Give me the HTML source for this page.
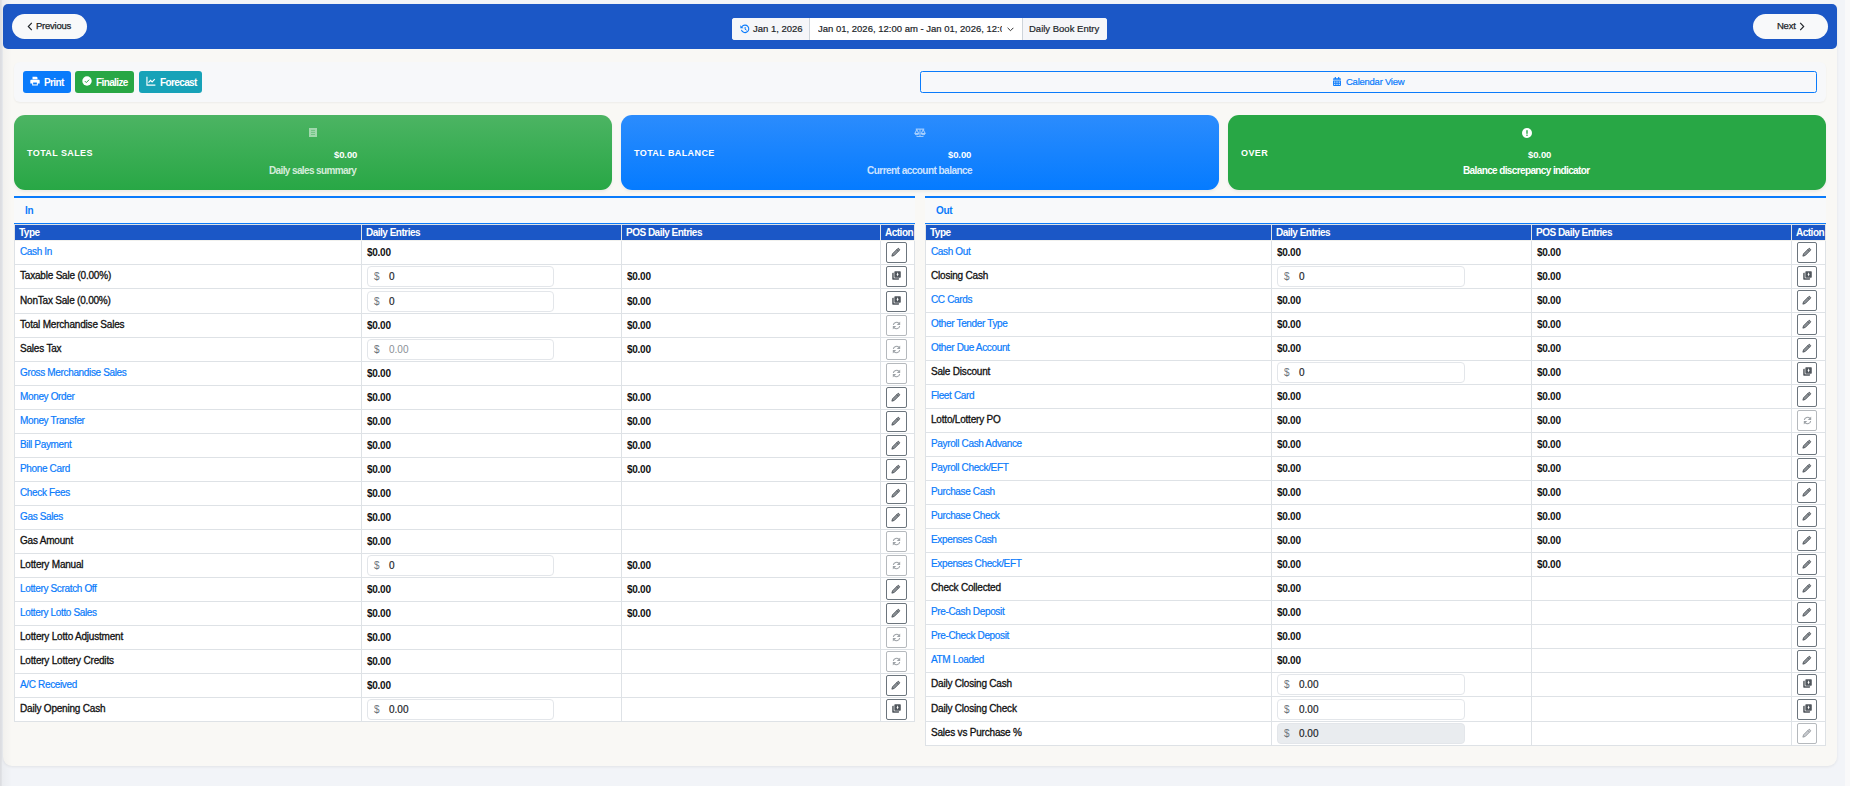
<!DOCTYPE html>
<html><head><meta charset="utf-8"><title>Daily Book Entry</title>
<style>
*{box-sizing:border-box;margin:0;padding:0}
html,body{width:1850px;height:786px;overflow:hidden}
body{background:#f2f4f8;font-family:"Liberation Sans",sans-serif;font-size:10px;color:#212529;position:relative}
.strip{position:absolute;left:0;top:0;width:12px;height:786px;background:linear-gradient(90deg,rgba(0,0,0,.1) 0,rgba(0,0,0,.075) 1.5px,rgba(0,0,0,.03) 2.5px,rgba(0,0,0,0) 12px);z-index:5;pointer-events:none}
.sb{position:absolute;left:1845px;top:0;width:5px;height:786px;background:#f9f9fa}
.wrap{position:absolute;left:3px;top:4px;width:1834px;height:762px;background:#f9f8f5;border-radius:6px 6px 9px 9px;box-shadow:0 1px 3px rgba(0,0,0,.07)}
.hdr{position:absolute;left:3px;top:4px;width:1834px;height:45px;background:#1b57c6;border-radius:5px}
.pill{position:absolute;top:14px;height:25px;background:#f8f9fa;border-radius:13px;color:#212529;font-size:9.5px;line-height:23px;letter-spacing:-0.25px;-webkit-text-stroke:0.25px #212529}
.pill svg{position:absolute;top:8.5px}
.dgrp{position:absolute;left:732px;top:18px;width:375px;height:22px;background:#fff;border-radius:3px;overflow:hidden;font-size:9.5px;letter-spacing:0;color:#212529;line-height:22px;white-space:nowrap;-webkit-text-stroke:0.2px #212529}
.dgrp .s1{position:absolute;left:0;top:0;width:78px;height:22px;background:#f5f6f9;border-right:1px solid #ced4da}
.dgrp .s3{position:absolute;left:290px;top:0;width:85px;height:22px;background:#f5f6f9;border-left:1px solid #ced4da}
.tbar{position:absolute;left:14px;top:62px;width:1812px;height:40px;background:#f7f8fa;border-radius:6px;box-shadow:0 1px 2px rgba(0,0,0,.05)}
.tb{position:absolute;top:71px;height:22px;border-radius:3px;color:#fff;font-weight:bold;font-size:10px;letter-spacing:-0.62px;line-height:23px}
.tb svg{position:absolute;top:5px}
.cal{position:absolute;left:920px;top:71px;width:897px;height:22px;border:1px solid #0a7bfb;border-radius:2.5px;color:#0a7bfb;font-size:9.5px;letter-spacing:-0.25px;line-height:20px;-webkit-text-stroke:0.2px #0a7bfb}
.card{position:absolute;top:115px;width:598px;height:75px;border-radius:11px;color:#fff;box-shadow:0 2px 3px rgba(0,0,0,.05)}
.card .lab{position:absolute;left:13px;top:33px;font-weight:bold;font-size:9px;letter-spacing:0.4px}
.card .amt{position:absolute;top:149px;font-weight:bold;font-size:9.5px;letter-spacing:-0.1px}
.card .sub{position:absolute;font-weight:bold;font-size:10px;letter-spacing:-0.62px;white-space:nowrap}
.sec{position:absolute;top:196px;width:901px;height:28px;border-top:2px solid #0a7bfb;border-bottom:1px solid #0a7bfb;background:#f8f9fa}
.sec span{position:absolute;left:11px;top:7px;color:#0a7bfb;font-weight:bold;font-size:10px;letter-spacing:-0.3px}
.tbl{position:absolute;top:224px;width:901px;border-top:1px solid #dee2e6;border-left:1px solid #dee2e6;background:#fff}
.thead{display:flex;height:16px;background:#1b57c6;color:#fff;font-weight:bold;font-size:10px;letter-spacing:-0.5px;line-height:16px;border-bottom:1px solid #f1f1ee}
.thead div{border-right:1px solid #dee2e6;padding-left:4px;white-space:nowrap;overflow:hidden}
.tr{display:flex;height:24px;border-bottom:1px solid #dee2e6}
.tr>div{border-right:1px solid #dee2e6;display:flex;align-items:center;padding-left:5px;white-space:nowrap}
.c1{width:347px}.c2{width:260px}.c3{width:259px}.c4{width:34px}
.tr>.c4{padding-left:5px}
.lnk{color:#0a7bfb;font-size:10px;letter-spacing:-0.35px;-webkit-text-stroke:0.2px #0a7bfb;position:relative;top:-1px}
.blk{color:#111;font-size:10px;letter-spacing:-0.2px;-webkit-text-stroke:0.3px #111;position:relative;top:-1px}
.val{color:#111;font-weight:bold;font-size:10px;letter-spacing:-0.26px}
.inp{position:relative;width:187px;height:21px;border:1px solid #e3e6ea;border-radius:4px;background:#fff;margin-left:0}
.inp .ds{position:absolute;left:6px;top:4px;color:#6c757d}
.inp .iv{position:absolute;left:21px;top:4px;color:#212529;-webkit-text-stroke:0.2px #212529}
.inp .ph{color:#8a9096;-webkit-text-stroke:0}
.inp.dis{background:#e9ecef}
.btn{width:21px;height:21px;border:1px solid #6c757d;border-radius:2px;display:flex;align-items:center;justify-content:center;background:#fff}
.btn.lt{border-color:#b5b9bd}

.R .c1{width:346px}.R .c3{width:260px}
.R .inp{width:188px}
.R .btn{width:20px}

</style></head>
<body>
<div class="strip"></div>
<div class="sb"></div>
<div class="wrap"></div>
<div class="hdr"></div>
<div class="pill" style="left:12px;width:75px;padding-left:24px"><svg style="left:15px;top:8px" width="6" height="9" viewBox="0 0 6 9"><path d="M4.8 0.8L1.3 4.5l3.5 3.7" fill="none" stroke="#212529" stroke-width="1.15"/></svg>Previous</div>
<div class="pill" style="left:1753px;width:75px;padding-left:24px">Next<svg style="left:46px;top:8px" width="6" height="9" viewBox="0 0 6 9"><path d="M1.2 0.8l3.5 3.7-3.5 3.7" fill="none" stroke="#212529" stroke-width="1.15"/></svg></div>
<div class="dgrp">
  <div class="s1"><svg style="position:absolute;left:8px;top:6px" width="10" height="10" viewBox="0 0 16 16"><path d="M3.2 4.2A6 6 0 1 1 2.3 9.5" fill="none" stroke="#0a7bfb" stroke-width="1.8"/><path d="M0.6 1.8v5h5z" fill="#0a7bfb"/><path d="M8.2 4.8v3.6l2.4 1.6" fill="none" stroke="#0a7bfb" stroke-width="1.6"/></svg><span style="position:absolute;left:21px">Jan 1, 2026</span></div>
  <div style="position:absolute;left:86px;width:184px;overflow:hidden">Jan 01, 2026, 12:00 am - Jan 01, 2026, 12:00 am</div>
  <svg style="position:absolute;left:275px;top:9px" width="7" height="5" viewBox="0 0 7 5"><path d="M0.6 0.8l2.9 2.9 2.9-2.9" fill="none" stroke="#333" stroke-width="1"/></svg>
  <div class="s3"><span style="position:absolute;left:6px">Daily Book Entry</span></div>
</div>
<div class="tbar"></div>
<div class="tb" style="left:23px;width:48px;background:#0a7bfb;padding-left:21px"><svg style="left:7px" width="10" height="10" viewBox="0 0 16 16"><path d="M4 1h6.5L12 2.5V5H4z M2 6h12c.8 0 1.5.7 1.5 1.5V12h-3v3h-9v-3H.5V7.5C.5 6.7 1.2 6 2 6z" fill="#fff"/><rect x="5" y="10.5" width="6" height="3" fill="#0a7bfb"/></svg>Print</div>
<div class="tb" style="left:75px;width:59px;background:#28a745;padding-left:21px"><svg style="left:7px" width="10" height="10" viewBox="0 0 16 16"><circle cx="8" cy="8" r="7.5" fill="#fff"/><path d="M4.6 8.2l2.3 2.3 4.5-4.6" fill="none" stroke="#28a745" stroke-width="1.6"/></svg>Finalize</div>
<div class="tb" style="left:139px;width:63px;background:#17a2b8;padding-left:21px"><svg style="left:7px" width="10" height="10" viewBox="0 0 16 16"><path d="M1.5 1v13.5H15" fill="none" stroke="#fff" stroke-width="1.8"/><path d="M4 10.5l3.2-3.5 2.6 2.4 4.2-4.4" fill="none" stroke="#fff" stroke-width="1.8"/></svg>Forecast</div>
<div class="cal"><svg style="position:absolute;left:412px;top:5px" width="8" height="9" viewBox="0 0 14 16"><path d="M3 0h2v2h4V0h2v2h1.5c.8 0 1.5.7 1.5 1.5V5H0V3.5C0 2.7.7 2 1.5 2H3z M0 6h14v8.5c0 .8-.7 1.5-1.5 1.5h-11C.7 16 0 15.3 0 14.5z" fill="#0a7bfb"/><path d="M2 8h2v2H2zM6 8h2v2H6zM10 8h2v2h-2zM2 12h2v2H2zM6 12h2v2H6zM10 12h2v2h-2z" fill="#f6f7fa"/></svg><span style="position:absolute;left:425px;top:0">Calendar View</span></div>

<div class="card" style="left:14px;background:linear-gradient(180deg,#4cb463,#28a745)">
  <div class="lab">TOTAL SALES</div>
  <svg style="position:absolute;left:295px;top:13px" width="8" height="9" viewBox="0 0 8 9"><path d="M0 0h8v9H0z" fill="rgba(255,255,255,.5)"/><path d="M2 2.4h4M2 4.4h4M2 6.5h4" stroke="rgba(40,167,69,.45)" stroke-width=".9"/></svg>
  <div class="amt" style="left:320px;top:34px">$0.00</div>
  <div class="sub" style="left:255px;top:50px;color:rgba(255,255,255,.8)">Daily sales summary</div>
</div>
<div class="card" style="left:621px;background:linear-gradient(180deg,#2b8cfd,#057bff)">
  <div class="lab">TOTAL BALANCE</div>
  <svg style="position:absolute;left:293px;top:13px" width="12" height="9" viewBox="0 0 24 18"><g fill="none" stroke="rgba(255,255,255,.55)" stroke-width="2.2"><path d="M12 1.5v15M5 17h14M3.5 2.2h17"/><path d="M5.6 3.5L1.6 11h8z M18.4 3.5l-4 7.5h8z" stroke-linejoin="round"/></g><path d="M1.3 11.3a4.3 3.2 0 0 0 8.6 0z M14.1 11.3a4.3 3.2 0 0 0 8.6 0z" fill="rgba(255,255,255,.55)"/></svg>
  <div class="amt" style="left:327px;top:34px">$0.00</div>
  <div class="sub" style="left:246px;top:50px;color:rgba(255,255,255,.8);letter-spacing:-0.53px">Current account balance</div>
</div>
<div class="card" style="left:1228px;background:#28a745">
  <div class="lab">OVER</div>
  <svg style="position:absolute;left:294px;top:13px" width="10" height="10" viewBox="0 0 10 10"><circle cx="5" cy="5" r="5" fill="#fff"/><rect x="4.3" y="2.2" width="1.4" height="3.6" fill="#28a745"/><rect x="4.3" y="6.6" width="1.4" height="1.3" fill="#28a745"/></svg>
  <div class="amt" style="left:300px;top:34px">$0.00</div>
  <div class="sub" style="left:235px;top:50px">Balance discrepancy indicator</div>
</div>

<div class="sec" style="left:14px"><span>In</span></div>
<div class="sec" style="left:925px"><span>Out</span></div>
<div class="tbl L" style="left:14px">
<div class="thead"><div class="c1">Type</div><div class="c2">Daily Entries</div><div class="c3">POS Daily Entries</div><div class="c4">Action</div></div>
<div class="tr"><div class="c1"><span class="lnk">Cash In</span></div><div class="c2"><span class="val">$0.00</span></div><div class="c3"></div><div class="c4"><div class="btn"><svg width="10" height="10" viewBox="0 0 16 16" style="position:relative;top:-1px;left:-0.5px"><path d="M1.4 14.6l1.1-3.8 8.2-8.2c.55-.55 1.45-.55 2 0l.7.7c.55.55.55 1.45 0 2l-8.2 8.2z" fill="#8d9297" stroke="#50565c" stroke-width="1.5" stroke-linejoin="round"/><path d="M9.2 4.1l2.7 2.7" stroke="#50565c" stroke-width="1.3"/></svg></div></div></div>
<div class="tr"><div class="c1"><span class="blk">Taxable Sale (0.00%)</span></div><div class="c2"><div class="inp"><span class="ds">$</span><span class="iv">0</span></div></div><div class="c3"><span class="val">$0.00</span></div><div class="c4"><div class="btn"><svg width="9" height="9" viewBox="0 0 16 16" style="position:relative;top:-1px"><path d="M3 3.2H1.6C.9 3.2.4 3.7.4 4.4v9.8c0 .7.5 1.2 1.2 1.2h9.8c.7 0 1.2-.5 1.2-1.2V12.9H4.2c-.7 0-1.2-.5-1.2-1.2z" fill="#50565c"/><rect x="4.2" y=".4" width="11.4" height="11.4" rx="1.2" fill="#50565c"/><path d="M9.9 2.4l1.5 3.7-1.5 3.7-1.5-3.7z" fill="#fff"/></svg></div></div></div>
<div class="tr" style="height:25px"><div class="c1"><span class="blk">NonTax Sale (0.00%)</span></div><div class="c2"><div class="inp"><span class="ds">$</span><span class="iv">0</span></div></div><div class="c3"><span class="val">$0.00</span></div><div class="c4"><div class="btn"><svg width="9" height="9" viewBox="0 0 16 16" style="position:relative;top:-1px"><path d="M3 3.2H1.6C.9 3.2.4 3.7.4 4.4v9.8c0 .7.5 1.2 1.2 1.2h9.8c.7 0 1.2-.5 1.2-1.2V12.9H4.2c-.7 0-1.2-.5-1.2-1.2z" fill="#50565c"/><rect x="4.2" y=".4" width="11.4" height="11.4" rx="1.2" fill="#50565c"/><path d="M9.9 2.4l1.5 3.7-1.5 3.7-1.5-3.7z" fill="#fff"/></svg></div></div></div>
<div class="tr"><div class="c1"><span class="blk">Total Merchandise Sales</span></div><div class="c2"><span class="val">$0.00</span></div><div class="c3"><span class="val">$0.00</span></div><div class="c4"><div class="btn lt"><svg width="9" height="9" viewBox="0 0 16 16" style="position:relative;top:-0.5px"><path d="M2.4 7.2A5.7 5.7 0 0 1 12.3 4.2" fill="none" stroke="#9da2a7" stroke-width="1.9"/><path d="M14.6 0.8v6.1H8.5z" fill="#9da2a7"/><path d="M13.6 8.8A5.7 5.7 0 0 1 3.7 11.8" fill="none" stroke="#9da2a7" stroke-width="1.9"/><path d="M1.4 15.2V9.1h6.1z" fill="#9da2a7"/></svg></div></div></div>
<div class="tr"><div class="c1"><span class="blk">Sales Tax</span></div><div class="c2"><div class="inp"><span class="ds">$</span><span class="iv ph">0.00</span></div></div><div class="c3"><span class="val">$0.00</span></div><div class="c4"><div class="btn lt"><svg width="9" height="9" viewBox="0 0 16 16" style="position:relative;top:-0.5px"><path d="M2.4 7.2A5.7 5.7 0 0 1 12.3 4.2" fill="none" stroke="#9da2a7" stroke-width="1.9"/><path d="M14.6 0.8v6.1H8.5z" fill="#9da2a7"/><path d="M13.6 8.8A5.7 5.7 0 0 1 3.7 11.8" fill="none" stroke="#9da2a7" stroke-width="1.9"/><path d="M1.4 15.2V9.1h6.1z" fill="#9da2a7"/></svg></div></div></div>
<div class="tr"><div class="c1"><span class="lnk">Gross Merchandise Sales</span></div><div class="c2"><span class="val">$0.00</span></div><div class="c3"></div><div class="c4"><div class="btn lt"><svg width="9" height="9" viewBox="0 0 16 16" style="position:relative;top:-0.5px"><path d="M2.4 7.2A5.7 5.7 0 0 1 12.3 4.2" fill="none" stroke="#9da2a7" stroke-width="1.9"/><path d="M14.6 0.8v6.1H8.5z" fill="#9da2a7"/><path d="M13.6 8.8A5.7 5.7 0 0 1 3.7 11.8" fill="none" stroke="#9da2a7" stroke-width="1.9"/><path d="M1.4 15.2V9.1h6.1z" fill="#9da2a7"/></svg></div></div></div>
<div class="tr"><div class="c1"><span class="lnk">Money Order</span></div><div class="c2"><span class="val">$0.00</span></div><div class="c3"><span class="val">$0.00</span></div><div class="c4"><div class="btn"><svg width="10" height="10" viewBox="0 0 16 16" style="position:relative;top:-1px;left:-0.5px"><path d="M1.4 14.6l1.1-3.8 8.2-8.2c.55-.55 1.45-.55 2 0l.7.7c.55.55.55 1.45 0 2l-8.2 8.2z" fill="#8d9297" stroke="#50565c" stroke-width="1.5" stroke-linejoin="round"/><path d="M9.2 4.1l2.7 2.7" stroke="#50565c" stroke-width="1.3"/></svg></div></div></div>
<div class="tr"><div class="c1"><span class="lnk">Money Transfer</span></div><div class="c2"><span class="val">$0.00</span></div><div class="c3"><span class="val">$0.00</span></div><div class="c4"><div class="btn"><svg width="10" height="10" viewBox="0 0 16 16" style="position:relative;top:-1px;left:-0.5px"><path d="M1.4 14.6l1.1-3.8 8.2-8.2c.55-.55 1.45-.55 2 0l.7.7c.55.55.55 1.45 0 2l-8.2 8.2z" fill="#8d9297" stroke="#50565c" stroke-width="1.5" stroke-linejoin="round"/><path d="M9.2 4.1l2.7 2.7" stroke="#50565c" stroke-width="1.3"/></svg></div></div></div>
<div class="tr"><div class="c1"><span class="lnk">Bill Payment</span></div><div class="c2"><span class="val">$0.00</span></div><div class="c3"><span class="val">$0.00</span></div><div class="c4"><div class="btn"><svg width="10" height="10" viewBox="0 0 16 16" style="position:relative;top:-1px;left:-0.5px"><path d="M1.4 14.6l1.1-3.8 8.2-8.2c.55-.55 1.45-.55 2 0l.7.7c.55.55.55 1.45 0 2l-8.2 8.2z" fill="#8d9297" stroke="#50565c" stroke-width="1.5" stroke-linejoin="round"/><path d="M9.2 4.1l2.7 2.7" stroke="#50565c" stroke-width="1.3"/></svg></div></div></div>
<div class="tr"><div class="c1"><span class="lnk">Phone Card</span></div><div class="c2"><span class="val">$0.00</span></div><div class="c3"><span class="val">$0.00</span></div><div class="c4"><div class="btn"><svg width="10" height="10" viewBox="0 0 16 16" style="position:relative;top:-1px;left:-0.5px"><path d="M1.4 14.6l1.1-3.8 8.2-8.2c.55-.55 1.45-.55 2 0l.7.7c.55.55.55 1.45 0 2l-8.2 8.2z" fill="#8d9297" stroke="#50565c" stroke-width="1.5" stroke-linejoin="round"/><path d="M9.2 4.1l2.7 2.7" stroke="#50565c" stroke-width="1.3"/></svg></div></div></div>
<div class="tr"><div class="c1"><span class="lnk">Check Fees</span></div><div class="c2"><span class="val">$0.00</span></div><div class="c3"></div><div class="c4"><div class="btn"><svg width="10" height="10" viewBox="0 0 16 16" style="position:relative;top:-1px;left:-0.5px"><path d="M1.4 14.6l1.1-3.8 8.2-8.2c.55-.55 1.45-.55 2 0l.7.7c.55.55.55 1.45 0 2l-8.2 8.2z" fill="#8d9297" stroke="#50565c" stroke-width="1.5" stroke-linejoin="round"/><path d="M9.2 4.1l2.7 2.7" stroke="#50565c" stroke-width="1.3"/></svg></div></div></div>
<div class="tr"><div class="c1"><span class="lnk">Gas Sales</span></div><div class="c2"><span class="val">$0.00</span></div><div class="c3"></div><div class="c4"><div class="btn"><svg width="10" height="10" viewBox="0 0 16 16" style="position:relative;top:-1px;left:-0.5px"><path d="M1.4 14.6l1.1-3.8 8.2-8.2c.55-.55 1.45-.55 2 0l.7.7c.55.55.55 1.45 0 2l-8.2 8.2z" fill="#8d9297" stroke="#50565c" stroke-width="1.5" stroke-linejoin="round"/><path d="M9.2 4.1l2.7 2.7" stroke="#50565c" stroke-width="1.3"/></svg></div></div></div>
<div class="tr"><div class="c1"><span class="blk">Gas Amount</span></div><div class="c2"><span class="val">$0.00</span></div><div class="c3"></div><div class="c4"><div class="btn lt"><svg width="9" height="9" viewBox="0 0 16 16" style="position:relative;top:-0.5px"><path d="M2.4 7.2A5.7 5.7 0 0 1 12.3 4.2" fill="none" stroke="#9da2a7" stroke-width="1.9"/><path d="M14.6 0.8v6.1H8.5z" fill="#9da2a7"/><path d="M13.6 8.8A5.7 5.7 0 0 1 3.7 11.8" fill="none" stroke="#9da2a7" stroke-width="1.9"/><path d="M1.4 15.2V9.1h6.1z" fill="#9da2a7"/></svg></div></div></div>
<div class="tr"><div class="c1"><span class="blk">Lottery Manual</span></div><div class="c2"><div class="inp"><span class="ds">$</span><span class="iv">0</span></div></div><div class="c3"><span class="val">$0.00</span></div><div class="c4"><div class="btn lt"><svg width="9" height="9" viewBox="0 0 16 16" style="position:relative;top:-0.5px"><path d="M2.4 7.2A5.7 5.7 0 0 1 12.3 4.2" fill="none" stroke="#9da2a7" stroke-width="1.9"/><path d="M14.6 0.8v6.1H8.5z" fill="#9da2a7"/><path d="M13.6 8.8A5.7 5.7 0 0 1 3.7 11.8" fill="none" stroke="#9da2a7" stroke-width="1.9"/><path d="M1.4 15.2V9.1h6.1z" fill="#9da2a7"/></svg></div></div></div>
<div class="tr"><div class="c1"><span class="lnk">Lottery Scratch Off</span></div><div class="c2"><span class="val">$0.00</span></div><div class="c3"><span class="val">$0.00</span></div><div class="c4"><div class="btn"><svg width="10" height="10" viewBox="0 0 16 16" style="position:relative;top:-1px;left:-0.5px"><path d="M1.4 14.6l1.1-3.8 8.2-8.2c.55-.55 1.45-.55 2 0l.7.7c.55.55.55 1.45 0 2l-8.2 8.2z" fill="#8d9297" stroke="#50565c" stroke-width="1.5" stroke-linejoin="round"/><path d="M9.2 4.1l2.7 2.7" stroke="#50565c" stroke-width="1.3"/></svg></div></div></div>
<div class="tr"><div class="c1"><span class="lnk">Lottery Lotto Sales</span></div><div class="c2"><span class="val">$0.00</span></div><div class="c3"><span class="val">$0.00</span></div><div class="c4"><div class="btn"><svg width="10" height="10" viewBox="0 0 16 16" style="position:relative;top:-1px;left:-0.5px"><path d="M1.4 14.6l1.1-3.8 8.2-8.2c.55-.55 1.45-.55 2 0l.7.7c.55.55.55 1.45 0 2l-8.2 8.2z" fill="#8d9297" stroke="#50565c" stroke-width="1.5" stroke-linejoin="round"/><path d="M9.2 4.1l2.7 2.7" stroke="#50565c" stroke-width="1.3"/></svg></div></div></div>
<div class="tr"><div class="c1"><span class="blk">Lottery Lotto Adjustment</span></div><div class="c2"><span class="val">$0.00</span></div><div class="c3"></div><div class="c4"><div class="btn lt"><svg width="9" height="9" viewBox="0 0 16 16" style="position:relative;top:-0.5px"><path d="M2.4 7.2A5.7 5.7 0 0 1 12.3 4.2" fill="none" stroke="#9da2a7" stroke-width="1.9"/><path d="M14.6 0.8v6.1H8.5z" fill="#9da2a7"/><path d="M13.6 8.8A5.7 5.7 0 0 1 3.7 11.8" fill="none" stroke="#9da2a7" stroke-width="1.9"/><path d="M1.4 15.2V9.1h6.1z" fill="#9da2a7"/></svg></div></div></div>
<div class="tr"><div class="c1"><span class="blk">Lottery Lottery Credits</span></div><div class="c2"><span class="val">$0.00</span></div><div class="c3"></div><div class="c4"><div class="btn lt"><svg width="9" height="9" viewBox="0 0 16 16" style="position:relative;top:-0.5px"><path d="M2.4 7.2A5.7 5.7 0 0 1 12.3 4.2" fill="none" stroke="#9da2a7" stroke-width="1.9"/><path d="M14.6 0.8v6.1H8.5z" fill="#9da2a7"/><path d="M13.6 8.8A5.7 5.7 0 0 1 3.7 11.8" fill="none" stroke="#9da2a7" stroke-width="1.9"/><path d="M1.4 15.2V9.1h6.1z" fill="#9da2a7"/></svg></div></div></div>
<div class="tr"><div class="c1"><span class="lnk">A/C Received</span></div><div class="c2"><span class="val">$0.00</span></div><div class="c3"></div><div class="c4"><div class="btn"><svg width="10" height="10" viewBox="0 0 16 16" style="position:relative;top:-1px;left:-0.5px"><path d="M1.4 14.6l1.1-3.8 8.2-8.2c.55-.55 1.45-.55 2 0l.7.7c.55.55.55 1.45 0 2l-8.2 8.2z" fill="#8d9297" stroke="#50565c" stroke-width="1.5" stroke-linejoin="round"/><path d="M9.2 4.1l2.7 2.7" stroke="#50565c" stroke-width="1.3"/></svg></div></div></div>
<div class="tr"><div class="c1"><span class="blk">Daily Opening Cash</span></div><div class="c2"><div class="inp"><span class="ds">$</span><span class="iv">0.00</span></div></div><div class="c3"></div><div class="c4"><div class="btn"><svg width="9" height="9" viewBox="0 0 16 16" style="position:relative;top:-1px"><path d="M3 3.2H1.6C.9 3.2.4 3.7.4 4.4v9.8c0 .7.5 1.2 1.2 1.2h9.8c.7 0 1.2-.5 1.2-1.2V12.9H4.2c-.7 0-1.2-.5-1.2-1.2z" fill="#50565c"/><rect x="4.2" y=".4" width="11.4" height="11.4" rx="1.2" fill="#50565c"/><path d="M9.9 2.4l1.5 3.7-1.5 3.7-1.5-3.7z" fill="#fff"/></svg></div></div></div>
</div>
<div class="tbl R" style="left:925px">
<div class="thead"><div class="c1">Type</div><div class="c2">Daily Entries</div><div class="c3">POS Daily Entries</div><div class="c4">Action</div></div>
<div class="tr"><div class="c1"><span class="lnk">Cash Out</span></div><div class="c2"><span class="val">$0.00</span></div><div class="c3"><span class="val">$0.00</span></div><div class="c4"><div class="btn"><svg width="10" height="10" viewBox="0 0 16 16" style="position:relative;top:-1px;left:-0.5px"><path d="M1.4 14.6l1.1-3.8 8.2-8.2c.55-.55 1.45-.55 2 0l.7.7c.55.55.55 1.45 0 2l-8.2 8.2z" fill="#8d9297" stroke="#50565c" stroke-width="1.5" stroke-linejoin="round"/><path d="M9.2 4.1l2.7 2.7" stroke="#50565c" stroke-width="1.3"/></svg></div></div></div>
<div class="tr"><div class="c1"><span class="blk">Closing Cash</span></div><div class="c2"><div class="inp"><span class="ds">$</span><span class="iv">0</span></div></div><div class="c3"><span class="val">$0.00</span></div><div class="c4"><div class="btn"><svg width="9" height="9" viewBox="0 0 16 16" style="position:relative;top:-1px"><path d="M3 3.2H1.6C.9 3.2.4 3.7.4 4.4v9.8c0 .7.5 1.2 1.2 1.2h9.8c.7 0 1.2-.5 1.2-1.2V12.9H4.2c-.7 0-1.2-.5-1.2-1.2z" fill="#50565c"/><rect x="4.2" y=".4" width="11.4" height="11.4" rx="1.2" fill="#50565c"/><path d="M9.9 2.4l1.5 3.7-1.5 3.7-1.5-3.7z" fill="#fff"/></svg></div></div></div>
<div class="tr"><div class="c1"><span class="lnk">CC Cards</span></div><div class="c2"><span class="val">$0.00</span></div><div class="c3"><span class="val">$0.00</span></div><div class="c4"><div class="btn"><svg width="10" height="10" viewBox="0 0 16 16" style="position:relative;top:-1px;left:-0.5px"><path d="M1.4 14.6l1.1-3.8 8.2-8.2c.55-.55 1.45-.55 2 0l.7.7c.55.55.55 1.45 0 2l-8.2 8.2z" fill="#8d9297" stroke="#50565c" stroke-width="1.5" stroke-linejoin="round"/><path d="M9.2 4.1l2.7 2.7" stroke="#50565c" stroke-width="1.3"/></svg></div></div></div>
<div class="tr"><div class="c1"><span class="lnk">Other Tender Type</span></div><div class="c2"><span class="val">$0.00</span></div><div class="c3"><span class="val">$0.00</span></div><div class="c4"><div class="btn"><svg width="10" height="10" viewBox="0 0 16 16" style="position:relative;top:-1px;left:-0.5px"><path d="M1.4 14.6l1.1-3.8 8.2-8.2c.55-.55 1.45-.55 2 0l.7.7c.55.55.55 1.45 0 2l-8.2 8.2z" fill="#8d9297" stroke="#50565c" stroke-width="1.5" stroke-linejoin="round"/><path d="M9.2 4.1l2.7 2.7" stroke="#50565c" stroke-width="1.3"/></svg></div></div></div>
<div class="tr"><div class="c1"><span class="lnk">Other Due Account</span></div><div class="c2"><span class="val">$0.00</span></div><div class="c3"><span class="val">$0.00</span></div><div class="c4"><div class="btn"><svg width="10" height="10" viewBox="0 0 16 16" style="position:relative;top:-1px;left:-0.5px"><path d="M1.4 14.6l1.1-3.8 8.2-8.2c.55-.55 1.45-.55 2 0l.7.7c.55.55.55 1.45 0 2l-8.2 8.2z" fill="#8d9297" stroke="#50565c" stroke-width="1.5" stroke-linejoin="round"/><path d="M9.2 4.1l2.7 2.7" stroke="#50565c" stroke-width="1.3"/></svg></div></div></div>
<div class="tr"><div class="c1"><span class="blk">Sale Discount</span></div><div class="c2"><div class="inp"><span class="ds">$</span><span class="iv">0</span></div></div><div class="c3"><span class="val">$0.00</span></div><div class="c4"><div class="btn"><svg width="9" height="9" viewBox="0 0 16 16" style="position:relative;top:-1px"><path d="M3 3.2H1.6C.9 3.2.4 3.7.4 4.4v9.8c0 .7.5 1.2 1.2 1.2h9.8c.7 0 1.2-.5 1.2-1.2V12.9H4.2c-.7 0-1.2-.5-1.2-1.2z" fill="#50565c"/><rect x="4.2" y=".4" width="11.4" height="11.4" rx="1.2" fill="#50565c"/><path d="M9.9 2.4l1.5 3.7-1.5 3.7-1.5-3.7z" fill="#fff"/></svg></div></div></div>
<div class="tr"><div class="c1"><span class="lnk">Fleet Card</span></div><div class="c2"><span class="val">$0.00</span></div><div class="c3"><span class="val">$0.00</span></div><div class="c4"><div class="btn"><svg width="10" height="10" viewBox="0 0 16 16" style="position:relative;top:-1px;left:-0.5px"><path d="M1.4 14.6l1.1-3.8 8.2-8.2c.55-.55 1.45-.55 2 0l.7.7c.55.55.55 1.45 0 2l-8.2 8.2z" fill="#8d9297" stroke="#50565c" stroke-width="1.5" stroke-linejoin="round"/><path d="M9.2 4.1l2.7 2.7" stroke="#50565c" stroke-width="1.3"/></svg></div></div></div>
<div class="tr"><div class="c1"><span class="blk">Lotto/Lottery PO</span></div><div class="c2"><span class="val">$0.00</span></div><div class="c3"><span class="val">$0.00</span></div><div class="c4"><div class="btn lt"><svg width="9" height="9" viewBox="0 0 16 16" style="position:relative;top:-0.5px"><path d="M2.4 7.2A5.7 5.7 0 0 1 12.3 4.2" fill="none" stroke="#9da2a7" stroke-width="1.9"/><path d="M14.6 0.8v6.1H8.5z" fill="#9da2a7"/><path d="M13.6 8.8A5.7 5.7 0 0 1 3.7 11.8" fill="none" stroke="#9da2a7" stroke-width="1.9"/><path d="M1.4 15.2V9.1h6.1z" fill="#9da2a7"/></svg></div></div></div>
<div class="tr"><div class="c1"><span class="lnk">Payroll Cash Advance</span></div><div class="c2"><span class="val">$0.00</span></div><div class="c3"><span class="val">$0.00</span></div><div class="c4"><div class="btn"><svg width="10" height="10" viewBox="0 0 16 16" style="position:relative;top:-1px;left:-0.5px"><path d="M1.4 14.6l1.1-3.8 8.2-8.2c.55-.55 1.45-.55 2 0l.7.7c.55.55.55 1.45 0 2l-8.2 8.2z" fill="#8d9297" stroke="#50565c" stroke-width="1.5" stroke-linejoin="round"/><path d="M9.2 4.1l2.7 2.7" stroke="#50565c" stroke-width="1.3"/></svg></div></div></div>
<div class="tr"><div class="c1"><span class="lnk">Payroll Check/EFT</span></div><div class="c2"><span class="val">$0.00</span></div><div class="c3"><span class="val">$0.00</span></div><div class="c4"><div class="btn"><svg width="10" height="10" viewBox="0 0 16 16" style="position:relative;top:-1px;left:-0.5px"><path d="M1.4 14.6l1.1-3.8 8.2-8.2c.55-.55 1.45-.55 2 0l.7.7c.55.55.55 1.45 0 2l-8.2 8.2z" fill="#8d9297" stroke="#50565c" stroke-width="1.5" stroke-linejoin="round"/><path d="M9.2 4.1l2.7 2.7" stroke="#50565c" stroke-width="1.3"/></svg></div></div></div>
<div class="tr"><div class="c1"><span class="lnk">Purchase Cash</span></div><div class="c2"><span class="val">$0.00</span></div><div class="c3"><span class="val">$0.00</span></div><div class="c4"><div class="btn"><svg width="10" height="10" viewBox="0 0 16 16" style="position:relative;top:-1px;left:-0.5px"><path d="M1.4 14.6l1.1-3.8 8.2-8.2c.55-.55 1.45-.55 2 0l.7.7c.55.55.55 1.45 0 2l-8.2 8.2z" fill="#8d9297" stroke="#50565c" stroke-width="1.5" stroke-linejoin="round"/><path d="M9.2 4.1l2.7 2.7" stroke="#50565c" stroke-width="1.3"/></svg></div></div></div>
<div class="tr"><div class="c1"><span class="lnk">Purchase Check</span></div><div class="c2"><span class="val">$0.00</span></div><div class="c3"><span class="val">$0.00</span></div><div class="c4"><div class="btn"><svg width="10" height="10" viewBox="0 0 16 16" style="position:relative;top:-1px;left:-0.5px"><path d="M1.4 14.6l1.1-3.8 8.2-8.2c.55-.55 1.45-.55 2 0l.7.7c.55.55.55 1.45 0 2l-8.2 8.2z" fill="#8d9297" stroke="#50565c" stroke-width="1.5" stroke-linejoin="round"/><path d="M9.2 4.1l2.7 2.7" stroke="#50565c" stroke-width="1.3"/></svg></div></div></div>
<div class="tr"><div class="c1"><span class="lnk">Expenses Cash</span></div><div class="c2"><span class="val">$0.00</span></div><div class="c3"><span class="val">$0.00</span></div><div class="c4"><div class="btn"><svg width="10" height="10" viewBox="0 0 16 16" style="position:relative;top:-1px;left:-0.5px"><path d="M1.4 14.6l1.1-3.8 8.2-8.2c.55-.55 1.45-.55 2 0l.7.7c.55.55.55 1.45 0 2l-8.2 8.2z" fill="#8d9297" stroke="#50565c" stroke-width="1.5" stroke-linejoin="round"/><path d="M9.2 4.1l2.7 2.7" stroke="#50565c" stroke-width="1.3"/></svg></div></div></div>
<div class="tr"><div class="c1"><span class="lnk">Expenses Check/EFT</span></div><div class="c2"><span class="val">$0.00</span></div><div class="c3"><span class="val">$0.00</span></div><div class="c4"><div class="btn"><svg width="10" height="10" viewBox="0 0 16 16" style="position:relative;top:-1px;left:-0.5px"><path d="M1.4 14.6l1.1-3.8 8.2-8.2c.55-.55 1.45-.55 2 0l.7.7c.55.55.55 1.45 0 2l-8.2 8.2z" fill="#8d9297" stroke="#50565c" stroke-width="1.5" stroke-linejoin="round"/><path d="M9.2 4.1l2.7 2.7" stroke="#50565c" stroke-width="1.3"/></svg></div></div></div>
<div class="tr"><div class="c1"><span class="blk">Check Collected</span></div><div class="c2"><span class="val">$0.00</span></div><div class="c3"></div><div class="c4"><div class="btn"><svg width="10" height="10" viewBox="0 0 16 16" style="position:relative;top:-1px;left:-0.5px"><path d="M1.4 14.6l1.1-3.8 8.2-8.2c.55-.55 1.45-.55 2 0l.7.7c.55.55.55 1.45 0 2l-8.2 8.2z" fill="#8d9297" stroke="#50565c" stroke-width="1.5" stroke-linejoin="round"/><path d="M9.2 4.1l2.7 2.7" stroke="#50565c" stroke-width="1.3"/></svg></div></div></div>
<div class="tr"><div class="c1"><span class="lnk">Pre-Cash Deposit</span></div><div class="c2"><span class="val">$0.00</span></div><div class="c3"></div><div class="c4"><div class="btn"><svg width="10" height="10" viewBox="0 0 16 16" style="position:relative;top:-1px;left:-0.5px"><path d="M1.4 14.6l1.1-3.8 8.2-8.2c.55-.55 1.45-.55 2 0l.7.7c.55.55.55 1.45 0 2l-8.2 8.2z" fill="#8d9297" stroke="#50565c" stroke-width="1.5" stroke-linejoin="round"/><path d="M9.2 4.1l2.7 2.7" stroke="#50565c" stroke-width="1.3"/></svg></div></div></div>
<div class="tr"><div class="c1"><span class="lnk">Pre-Check Deposit</span></div><div class="c2"><span class="val">$0.00</span></div><div class="c3"></div><div class="c4"><div class="btn"><svg width="10" height="10" viewBox="0 0 16 16" style="position:relative;top:-1px;left:-0.5px"><path d="M1.4 14.6l1.1-3.8 8.2-8.2c.55-.55 1.45-.55 2 0l.7.7c.55.55.55 1.45 0 2l-8.2 8.2z" fill="#8d9297" stroke="#50565c" stroke-width="1.5" stroke-linejoin="round"/><path d="M9.2 4.1l2.7 2.7" stroke="#50565c" stroke-width="1.3"/></svg></div></div></div>
<div class="tr"><div class="c1"><span class="lnk">ATM Loaded</span></div><div class="c2"><span class="val">$0.00</span></div><div class="c3"></div><div class="c4"><div class="btn"><svg width="10" height="10" viewBox="0 0 16 16" style="position:relative;top:-1px;left:-0.5px"><path d="M1.4 14.6l1.1-3.8 8.2-8.2c.55-.55 1.45-.55 2 0l.7.7c.55.55.55 1.45 0 2l-8.2 8.2z" fill="#8d9297" stroke="#50565c" stroke-width="1.5" stroke-linejoin="round"/><path d="M9.2 4.1l2.7 2.7" stroke="#50565c" stroke-width="1.3"/></svg></div></div></div>
<div class="tr"><div class="c1"><span class="blk">Daily Closing Cash</span></div><div class="c2"><div class="inp"><span class="ds">$</span><span class="iv">0.00</span></div></div><div class="c3"></div><div class="c4"><div class="btn"><svg width="9" height="9" viewBox="0 0 16 16" style="position:relative;top:-1px"><path d="M3 3.2H1.6C.9 3.2.4 3.7.4 4.4v9.8c0 .7.5 1.2 1.2 1.2h9.8c.7 0 1.2-.5 1.2-1.2V12.9H4.2c-.7 0-1.2-.5-1.2-1.2z" fill="#50565c"/><rect x="4.2" y=".4" width="11.4" height="11.4" rx="1.2" fill="#50565c"/><path d="M9.9 2.4l1.5 3.7-1.5 3.7-1.5-3.7z" fill="#fff"/></svg></div></div></div>
<div class="tr" style="height:25px"><div class="c1"><span class="blk">Daily Closing Check</span></div><div class="c2"><div class="inp"><span class="ds">$</span><span class="iv">0.00</span></div></div><div class="c3"></div><div class="c4"><div class="btn"><svg width="9" height="9" viewBox="0 0 16 16" style="position:relative;top:-1px"><path d="M3 3.2H1.6C.9 3.2.4 3.7.4 4.4v9.8c0 .7.5 1.2 1.2 1.2h9.8c.7 0 1.2-.5 1.2-1.2V12.9H4.2c-.7 0-1.2-.5-1.2-1.2z" fill="#50565c"/><rect x="4.2" y=".4" width="11.4" height="11.4" rx="1.2" fill="#50565c"/><path d="M9.9 2.4l1.5 3.7-1.5 3.7-1.5-3.7z" fill="#fff"/></svg></div></div></div>
<div class="tr"><div class="c1"><span class="blk">Sales vs Purchase %</span></div><div class="c2"><div class="inp dis"><span class="ds">$</span><span class="iv">0.00</span></div></div><div class="c3"></div><div class="c4"><div class="btn lt"><svg width="10" height="10" viewBox="0 0 16 16" style="position:relative;top:-1px;left:-0.5px"><path d="M1.4 14.6l1.1-3.8 8.2-8.2c.55-.55 1.45-.55 2 0l.7.7c.55.55.55 1.45 0 2l-8.2 8.2z" fill="#c9ccd0" stroke="#959a9f" stroke-width="1.5" stroke-linejoin="round"/><path d="M9.2 4.1l2.7 2.7" stroke="#959a9f" stroke-width="1.3"/></svg></div></div></div>
</div>

</body></html>
